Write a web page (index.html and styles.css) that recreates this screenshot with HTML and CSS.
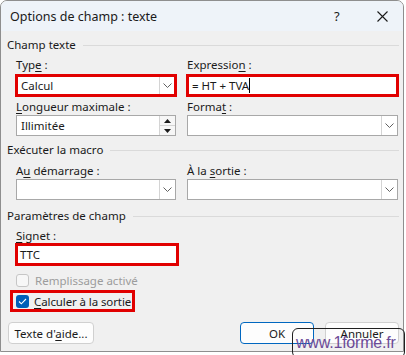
FILE: index.html
```html
<!DOCTYPE html>
<html>
  <head>
    <meta charset="UTF-8" />
    <title>Options de champ : texte</title>
    <link rel="stylesheet" href="styles.css">
  </head>
  <body>
    <div class="dialog">
      <div class="title-bar">
        <span class="title">Options de champ : texte</span>
        <span class="help">?</span>
        <svg class="close" width="11" height="11" viewBox="0 0 11 11">
          <path d="M0.5 0.5 L10.5 10.5 M10.5 0.5 L0.5 10.5" stroke="#1a1a1a" stroke-width="1.1" fill="none" />
        </svg>
      </div>

      <div class="content">
        <div class="group-title first">Champ texte</div>
        <div class="fields">
          <div class="field">
            <div class="label">Typ<u>e</u> :</div>
            <div class="combo hl">
              <span class="value">Calcul</span>
              <span class="drop">
                <svg width="9" height="5" viewBox="0 0 9 5"><polyline points="0.5,0.5 4.5,4.5 8.5,0.5" stroke="#606060" fill="none" /></svg>
              </span>
            </div>
          </div>
          <div class="field">
            <div class="label">Expressio<u>n</u> :</div>
            <div class="input hl wide"><span class="value">= HT + TVA</span><span class="caret"></span></div>
          </div>
          <div class="field row2">
            <div class="label"><u>L</u>ongueur maximale :</div>
            <div class="input spin">
              <span class="value">Illimitée</span>
              <span class="spin-btns">
                <span class="spin-btn"><svg width="7" height="4" viewBox="0 0 7 4"><polygon points="0,4 3.5,0 7,4" fill="#1a1a1a" /></svg></span>
                <span class="spin-btn"><svg width="7" height="4" viewBox="0 0 7 4"><polygon points="0,0 3.5,4 7,0" fill="#1a1a1a" /></svg></span>
              </span>
            </div>
          </div>
          <div class="field row2">
            <div class="label">Forma<u>t</u> :</div>
            <div class="combo">
              <span class="value"></span>
              <span class="drop">
                <svg width="9" height="5" viewBox="0 0 9 5"><polyline points="0.5,0.5 4.5,4.5 8.5,0.5" stroke="#606060" fill="none" /></svg>
              </span>
            </div>
          </div>
        </div>

        <div class="group-title second">Exécuter la macro</div>
        <div class="fields">
          <div class="field row3">
            <div class="label">A<u>u</u> démarrage :</div>
            <div class="combo">
              <span class="value"></span>
              <span class="drop">
                <svg width="9" height="5" viewBox="0 0 9 5"><polyline points="0.5,0.5 4.5,4.5 8.5,0.5" stroke="#606060" fill="none" /></svg>
              </span>
            </div>
          </div>
          <div class="field row3">
            <div class="label">À la <u>s</u>ortie :</div>
            <div class="combo">
              <span class="value"></span>
              <span class="drop">
                <svg width="9" height="5" viewBox="0 0 9 5"><polyline points="0.5,0.5 4.5,4.5 8.5,0.5" stroke="#606060" fill="none" /></svg>
              </span>
            </div>
          </div>
        </div>

        <div class="group-title third">Paramètres de champ</div>
        <div class="settings">
          <div class="label signet-label"><u>S</u>ignet :</div>
          <div class="signet"><span class="value">TTC</span></div>
          <div class="check disabled">
            <span class="box"></span>
            <span>Remplissage activé</span>
          </div>
          <div class="check checked">
            <span class="box">
              <svg width="9" height="7" viewBox="0 0 9 7"><polyline points="1,3.5 3.3,5.8 8,1" stroke="#fff" stroke-width="1.1" fill="none" /></svg>
            </span>
            <span><u>C</u>alculer à la sortie</span>
          </div>
        </div>

        <div class="buttons">
          <button class="btn help-btn">Texte d'<u>a</u>ide...</button>
          <span class="spacer"></span>
          <button class="btn default">OK</button>
          <button class="btn">Annuler</button>
        </div>
      </div>
    </div>
    <div class="stamp">www.1forme.fr</div>
  </body>
</html>
```

FILE: styles.css
```css
body {
  margin: 0;
  font-family: 'Noto Sans', sans-serif;
  font-size: 11.5px;
  color: #1a1a1a;
  background: #ffffff;
}
u {
  text-underline-offset: 2px;
}
.dialog {
  width: 404px;
  height: 352px;
  box-sizing: border-box;
  border: 1px solid #8e8e8e;
  border-radius: 7px 7px 0 0;
  background: #f0f0f0;
  overflow: hidden;
}
.title-bar {
  display: flex;
  align-items: center;
  height: 30px;
  padding-left: 9px;
  background: #eef3f9;
}
.title {
  flex: 1;
  font-size: 12.5px;
}
.help {
  width: 12px;
  font-size: 13px;
  margin-right: 31px;
}
.close {
  margin-right: 15px;
}
.content {
  padding: 0 4px 0 6px;
}
.group-title {
  display: flex;
  align-items: center;
  gap: 7px;
  height: 16px;
  line-height: 16px;
}
.group-title::after {
  content: '';
  flex: 1;
  height: 1px;
  background: #dadada;
}
.group-title.first {
  margin-top: 6px;
}
.group-title.second {
  margin-top: 6px;
}
.group-title.third {
  margin-top: 8px;
}
.fields {
  display: grid;
  grid-template-columns: 160px 211px;
  column-gap: 11px;
  padding-left: 9px;
}
.label {
  height: 16px;
  line-height: 16px;
}
.field .label {
  margin-top: 4px;
  margin-bottom: 2px;
}
.field.row2 .label {
  margin-top: 3px;
  margin-bottom: 0;
}
.field.row3 .label {
  margin-top: 5px;
  margin-bottom: 0;
}
.combo,
.input,
.signet {
  display: flex;
  align-items: center;
  height: 21px;
  box-sizing: border-box;
  border: 1px solid #a8a8a8;
  background: #ffffff;
}
.value {
  flex: 1;
  padding-left: 4px;
}
.input.wide .value {
  flex: none;
}
.caret {
  width: 1px;
  height: 15px;
  background: #000;
}
.drop {
  display: flex;
  align-items: center;
  justify-content: center;
  width: 15px;
  height: 100%;
  border-left: 1px solid #d4d4d4;
}
.hl {
  outline: 3px solid #e10000;
  outline-offset: -2px;
}
.spin-btns {
  display: flex;
  flex-direction: column;
  width: 15px;
  height: 100%;
  border-left: 1px solid #d4d4d4;
}
.spin-btn {
  flex: 1;
  display: flex;
  align-items: center;
  justify-content: center;
  background: #f6f6f6;
}
.spin-btn + .spin-btn {
  border-top: 1px solid #d4d4d4;
}
.settings {
  padding-left: 9px;
}
.signet-label {
  margin-top: 4px;
  height: 15px;
  line-height: 15px;
}
.signet {
  width: 164px;
  height: 23px;
  margin-left: -1px;
  border: 3px solid #e10000;
}
.signet .value {
  padding-left: 2px;
}
.check {
  display: flex;
  align-items: center;
  gap: 6px;
  height: 20px;
  white-space: nowrap;
}
.check .box {
  display: flex;
  align-items: center;
  justify-content: center;
  width: 13px;
  height: 13px;
  box-sizing: border-box;
  border-radius: 3px;
}
.check.disabled {
  margin-top: 4px;
  color: #9c9c9c;
}
.check.disabled .box {
  border: 1px solid #c6c6c6;
  background: #f7f7f7;
}
.check.checked {
  width: max-content;
  height: 16px;
  gap: 5px;
  margin-left: -6px;
  padding: 0 1px 0 3px;
  border: 3px solid #e10000;
  letter-spacing: -0.1px;
}
.check.checked .box {
  background: #005fb8;
}
.buttons {
  display: flex;
  gap: 11px;
  margin-top: 10px;
  padding-left: 1px;
}
.spacer {
  flex: 1;
}
.btn {
  height: 22px;
  padding: 0;
  font-family: inherit;
  font-size: 11.5px;
  color: #1a1a1a;
  background: #fdfdfd;
  border: 1px solid #d0d0d0;
  border-radius: 4px;
  width: 74px;
}
.btn.help-btn {
  width: 86px;
}
.btn.default {
  border-color: #0067c0;
}
.stamp {
  position: absolute;
  left: 292px;
  top: 328px;
  width: 113px;
  height: 30px;
  box-sizing: border-box;
  border: 1px solid #202020;
  border-radius: 6px;
  padding: 4px 0 0 3px;
  font-family: 'Liberation Sans', sans-serif;
  font-size: 16px;
  line-height: 20px;
  color: #6b4a98;
  letter-spacing: -0.2px;
  white-space: nowrap;
}
```
